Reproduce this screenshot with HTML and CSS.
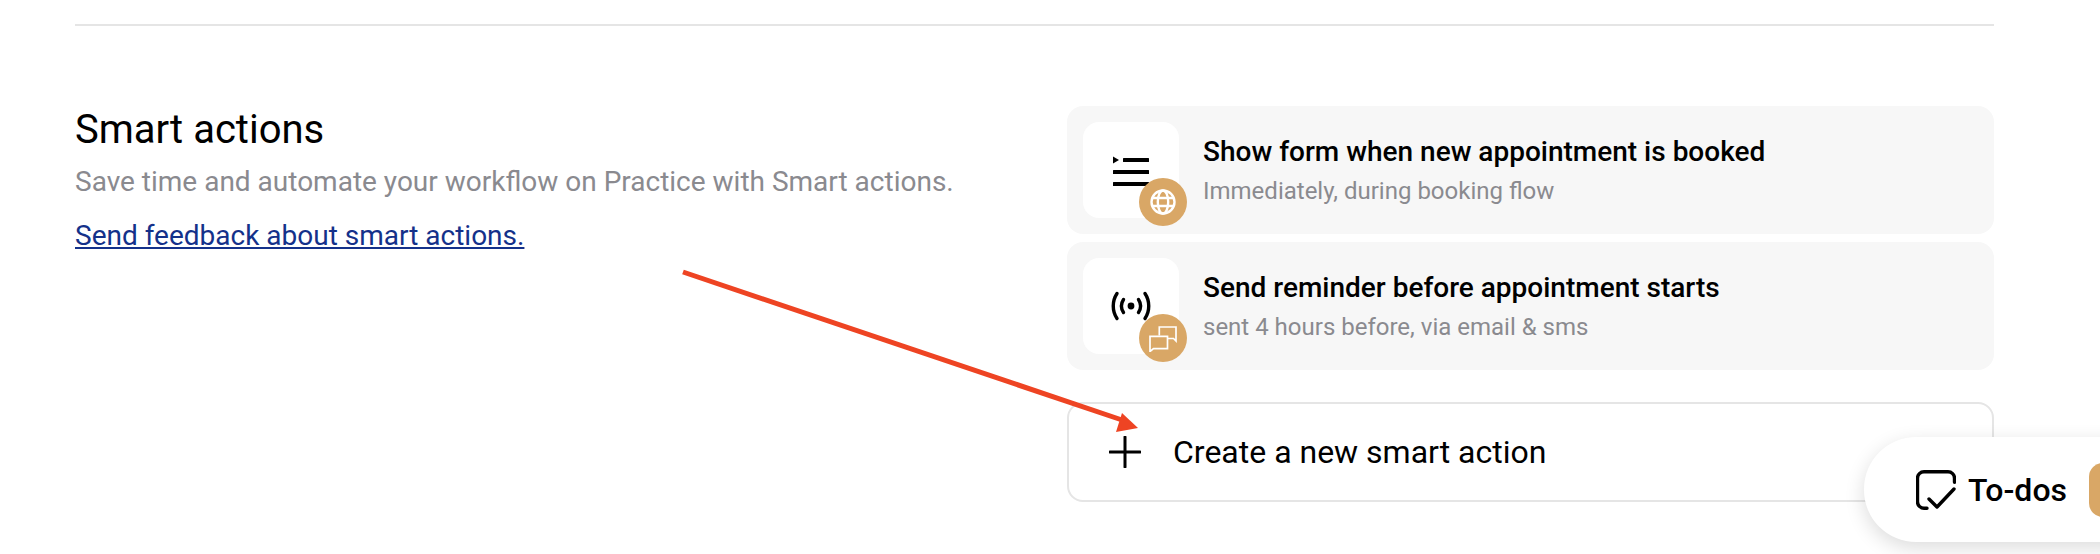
FILE: index.html
```html
<!DOCTYPE html>
<html lang="en">
<head>
<meta charset="utf-8">
<title>Smart actions</title>
<link rel="stylesheet" href="styles.css">
</head>
<body>
<main class="page">
  <hr class="divider">
  <section class="section">
    <div class="intro">
      <h2 class="intro-title">Smart actions</h2>
      <p class="intro-desc">Save time and automate your workflow on Practice with Smart actions.</p>
      <a class="intro-link" href="#">Send feedback about smart actions.</a>
    </div>
    <div class="actions">
      <div class="action-card">
        <div class="tile">
          <svg class="tile-icon" viewBox="0 0 48 48" fill="#000"><path d="M6 10.500l6 3.500-6 3.500z"/><rect x="16" y="12" width="26" height="4" rx=".5"/><rect x="6" y="24" width="36" height="4" rx=".5"/><rect x="6" y="36" width="36" height="4" rx=".5"/></svg>
          <span class="badge">
            <svg class="badge-icon" viewBox="0 0 28 28" fill="none" stroke="#fff" stroke-width="2.400"><circle cx="14" cy="14" r="11.500"/><ellipse cx="14" cy="14" rx="5.200" ry="11.500"/><path d="M3.500 10h21M3.500 18h21"/></svg>
          </span>
        </div>
        <div class="action-text">
          <div class="action-title">Show form when new appointment is booked</div>
          <div class="action-sub">Immediately, during booking flow</div>
        </div>
      </div>
      <div class="action-card">
        <div class="tile">
          <svg class="tile-icon" viewBox="0 0 48 48" fill="none" stroke="#000" stroke-width="3.400" stroke-linecap="round"><circle cx="24" cy="24" r="3.400" fill="#000" stroke="none"/><path d="M16.500 17.500c-2.600 4-2.600 9 0 13M31.500 17.500c2.600 4 2.600 9 0 13M10 11.500c-5 7.500-5 17.500 0 25M38 11.500c5 7.500 5 17.500 0 25"/></svg>
          <span class="badge">
            <svg class="badge-icon" viewBox="0 0 28 28" fill="none" stroke="#fff" stroke-width="1.700"><path d="M10.300 11.500V3H27v14l-2.500-2.500H19"/><path d="M1 12.300h17.500v12.400H4.500L1 27.500z"/></svg>
          </span>
        </div>
        <div class="action-text">
          <div class="action-title">Send reminder before appointment starts</div>
          <div class="action-sub">sent 4 hours before, via email &amp; sms</div>
        </div>
      </div>
      <button class="create" type="button">
        <svg class="create-icon" viewBox="0 0 32 32" fill="none" stroke="#000" stroke-width="3" stroke-linecap="round"><path d="M16 1v30M1 16h30"/></svg>
        <span>Create a new smart action</span>
      </button>
    </div>
  </section>
</main>

<svg class="arrow" viewBox="0 0 2100 554"><path d="M683 272 1125 421" fill="none" stroke="#ee4423" stroke-width="5"/><path d="M1138 428 1122 413 1116 432z" fill="#ee4423"/></svg>

<div class="todos">
  <svg class="todos-icon" viewBox="0 0 40 40" fill="none" stroke="#000" stroke-width="3.400" stroke-linecap="round" stroke-linejoin="round"><path d="M11 38.300H8a6.500 6.500 0 0 1-6.500-6.500V8.200A6.500 6.500 0 0 1 8 1.700h24a6.500 6.500 0 0 1 6.500 6.500v4"/><path d="M13 29l8 8 17-18"/></svg>
  <span class="todos-label">To-dos</span>
  <span class="todos-count"></span>
</div>
</body>
</html>
```
FILE: styles.css
```css
* { box-sizing: border-box; }
html, body { margin: 0; height: 100%; background: #fff; overflow: hidden; }
body { font-family: Roboto, "Liberation Sans", sans-serif; color: #000; position: relative; }

.page { padding: 24px 106px 0 75px; }
.divider { margin: 0; border: 0; height: 2px; background: #e5e5e5; }

.section { display: grid; grid-template-columns: 992px 927px; margin-top: 80px; }

.intro-title { margin: 0; font-size: 40px; line-height: 44px; font-weight: 400; padding-top: 2px; }
.intro-desc { margin: 13px 0 0; font-size: 28px; line-height: 34px; color: #8a8a8f; }
.intro-link { display: inline-block; margin-top: 20px; font-size: 28px; line-height: 34px; color: #14318a; text-decoration: underline; }

.actions { display: flex; flex-direction: column; }
.action-card { display: flex; align-items: center; gap: 24px; height: 128px; padding: 16px; margin-bottom: 8px; background: #f7f7f7; border-radius: 16px; }
.tile { position: relative; flex: none; width: 96px; height: 96px; background: #fff; border-radius: 16px; display: flex; align-items: center; justify-content: center; }
.tile-icon { width: 48px; height: 48px; }
.badge { position: absolute; right: -8px; bottom: -8px; width: 48px; height: 48px; border-radius: 50%; background: #d9a766; display: flex; align-items: center; justify-content: center; }
.badge-icon { width: 28px; height: 28px; }
.action-text { padding-top: 1px; }
.action-title { font-size: 28px; line-height: 32px; font-weight: 500; }
.action-sub { margin-top: 8px; font-size: 24px; line-height: 30px; color: #8a8a8f; }

.create { display: flex; align-items: center; gap: 32px; width: 100%; height: 100px; margin-top: 24px; padding: 0 40px; background: #fff; border: 2px solid #e5e5e5; border-radius: 16px; font: inherit; font-size: 32px; color: #000; text-align: left; }
.create-icon { width: 32px; height: 32px; flex: none; }

.arrow { position: absolute; left: 0; top: 0; width: 2100px; height: 554px; pointer-events: none; }

.todos { position: absolute; left: 1864px; top: 437px; width: 300px; height: 105px; display: flex; align-items: center; padding-left: 52px; gap: 12px; background: #fff; border-radius: 52px 0 0 52px; box-shadow: 0 6px 20px rgba(0,0,0,.14); }
.todos-icon { width: 40px; height: 40px; flex: none; }
.todos-label { font-size: 32px; font-weight: 500; }
.todos-count { width: 60px; height: 54px; margin-left: 10px; background: #d9a766; border-radius: 14px; }
```
